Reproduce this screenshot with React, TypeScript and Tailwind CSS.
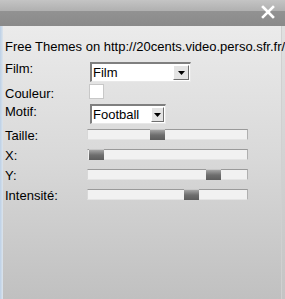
import React from "react";

function Select({ width, btnWidth, value }: { width: number; btnWidth: number; value: string }) {
  return (
    <div
      className="relative h-[20px] bg-white border-t-2 border-l-2 border-b border-r border-t-[#7f7f7f] border-l-[#7f7f7f] border-b-[#e8e8e8] border-r-[#e8e8e8] flex items-center"
      style={{ width }}
    >
      <span className="pl-[1px] text-[13px] leading-[16px] text-black">{value}</span>
      <div
        className="absolute right-[1px] top-[1px] bottom-[1px] bg-[#e4e4e4] border border-t-white border-l-white border-b-[#6f6f6f] border-r-[#6f6f6f] flex items-center justify-center"
        style={{ width: btnWidth }}
      >
        <svg width="7" height="4" viewBox="0 0 7 4">
          <path d="M0 0H7L3.5 4Z" fill="#000" />
        </svg>
      </div>
    </div>
  );
}

function Slider({ pos }: { pos: number }) {
  return (
    <div className="relative ml-[3px] mt-[5px] w-[161px] h-[11px] bg-[#f1f1f1] border-t border-t-[#9a9a9a] border-r border-r-[#b0b0b0] border-l border-l-[#d8d8d8] border-b border-b-[#e4e4e4]">
      <div
        className="absolute top-[-1px] h-[11px] w-[15px] bg-gradient-to-b from-[#a4a4a4] via-[#6e6e6e] to-[#5c5c5c] border-t border-t-[#c8c8c8]"
        style={{ left: pos }}
      />
    </div>
  );
}

function Label({ children, mt }: { children: React.ReactNode; mt: string }) {
  return (
    <div className={`w-[84px] shrink-0 text-[13px] leading-[15px] text-black ${mt}`}>{children}</div>
  );
}

export default function App() {
  return (
    <div
      className="w-[285px] h-[299px] flex flex-col overflow-hidden"
      style={{ fontFamily: '"Liberation Sans", Arial, sans-serif' }}
    >
      <div className="h-[26px] shrink-0 flex flex-col relative">
        <div className="h-[11px] bg-gradient-to-b from-[#c4c4c4] to-[#b0b0b0]" />
        <div className="flex-1 bg-gradient-to-b from-[#929292] to-[#8a8a8a]" />
        <div className="absolute right-[10px] top-[5px]">
          <svg width="14" height="14" viewBox="0 0 14 14">
            <path d="M2 2L12 12M12 2L2 12" stroke="#fff" strokeWidth="2.6" strokeLinecap="square" />
          </svg>
        </div>
      </div>
      <div className="flex-1 flex bg-gradient-to-b from-[#ebebeb] via-[#d8d8d8] to-[#c0c0c0]">
        <div className="w-[3px] shrink-0 bg-gradient-to-r from-[#bcd0e6] to-[#dce4ec]" />
        <div className="flex-1 min-w-0 flex flex-col pt-[13px] pl-[2px]">
          <div className="relative z-10 text-[13px] leading-[15px] text-black whitespace-nowrap">
            Free Themes on http://20cents.video.perso.sfr.fr/
          </div>
          <div className="flex items-start h-[20px] mt-[8px]">
            <Label mt="-mt-[1px]">Film:</Label>
            <div className="ml-[1px]">
              <Select width={101} btnWidth={16} value="Film" />
            </div>
          </div>
          <div className="flex items-start h-[16px] mt-[2px]">
            <Label mt="mt-[2px]">Couleur:</Label>
            <div className="w-[15px] h-[15px] bg-white border border-[#c8c8c8]" />
          </div>
          <div className="flex items-start h-[20px] mt-[4px]">
            <Label mt="mt-[0px]">Motif:</Label>
            <div className="ml-[1px]">
              <Select width={76} btnWidth={13} value="Football" />
            </div>
          </div>
          <div className="flex items-start h-[20px]">
            <Label mt="mt-[4px]">Taille:</Label>
            <div className="-ml-[5px]">
              <Slider pos={62} />
            </div>
          </div>
          <div className="flex items-start h-[20px]">
            <Label mt="mt-[4px]">X:</Label>
            <div className="-ml-[5px]">
              <Slider pos={1} />
            </div>
          </div>
          <div className="flex items-start h-[20px]">
            <Label mt="mt-[4px]">Y:</Label>
            <div className="-ml-[5px]">
              <Slider pos={118} />
            </div>
          </div>
          <div className="flex items-start h-[20px]">
            <Label mt="mt-[4px]">Intensité:</Label>
            <div className="-ml-[5px]">
              <Slider pos={96} />
            </div>
          </div>
        </div>
        <div className="w-[4px] shrink-0 bg-gradient-to-b from-[#e0e0e0] to-[#c4c4c4] border-l border-l-[#d0d0d0]" />
      </div>
    </div>
  );
}
